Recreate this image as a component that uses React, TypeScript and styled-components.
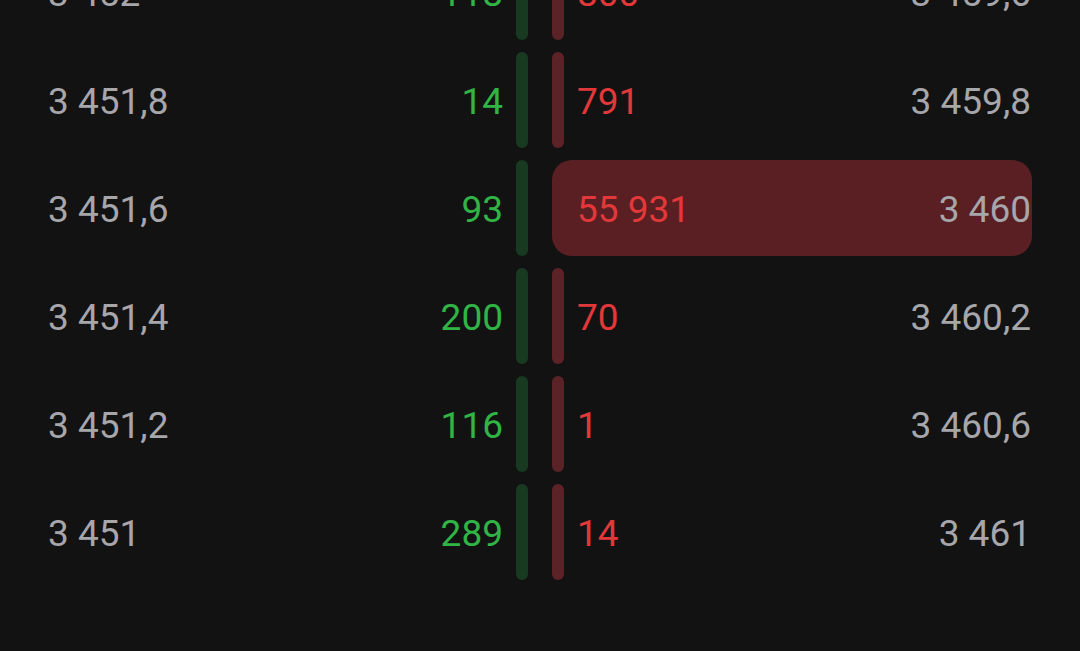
import React from 'react';
import styled, { createGlobalStyle } from 'styled-components';

const GlobalStyle = createGlobalStyle`
html, body {
  margin: 0;
  padding: 0;
  background: #121212;
  overflow: hidden;
}
`;

const COLORS = {
    bg: '#121212',
    price: '#a6a6ab',
    bid: '#31b446',
    ask: '#e2383a',
    bidBar: '#173a20',
    askBar: '#5b2327',
    highlight: '#5a1f22',
};

type Row = {
    bidPrice: string;
    bidQty: string;
    askQty: string;
    askPrice: string;
    highlighted?: boolean;
};

const rows: Row[] = [
    { bidPrice: '3 452', bidQty: '118', askQty: '800', askPrice: '3 459,6' },
    { bidPrice: '3 451,8', bidQty: '14', askQty: '791', askPrice: '3 459,8' },
    {
        bidPrice: '3 451,6',
        bidQty: '93',
        askQty: '55 931',
        askPrice: '3 460',
        highlighted: true,
    },
    { bidPrice: '3 451,4', bidQty: '200', askQty: '70', askPrice: '3 460,2' },
    { bidPrice: '3 451,2', bidQty: '116', askQty: '1', askPrice: '3 460,6' },
    { bidPrice: '3 451', bidQty: '289', askQty: '14', askPrice: '3 461' },
];

const Screen = styled.div`
    width: 1080px;
    height: 651px;
    background: ${COLORS.bg};
    overflow: hidden;
    font-family: Roboto, 'Noto Sans', sans-serif;
    font-size: 37px;
`;

// list is scrolled, so the first row sits partly above the top edge
const Book = styled.div`
    display: flex;
    flex-direction: column;
    gap: 12px;
    margin-top: -56px;
    padding: 0 48px;
`;

const BookRow = styled.div`
    display: flex;
    align-items: stretch;
    height: 96px;
`;

const BidSide = styled.div`
    width: 480px;
    display: flex;
    align-items: center;
`;

const Cell = styled.span`
    padding-top: 3px;
`;

const Price = styled(Cell)`
    color: ${COLORS.price};
`;

const BidQty = styled(Cell)`
    margin-left: auto;
    margin-right: 13px;
    color: ${COLORS.bid};
`;

const Bar = styled.div<{ $color: string }>`
    width: 12px;
    align-self: stretch;
    border-radius: 6px;
    background: ${(p) => p.$color};
    flex-shrink: 0;
`;

const AskSide = styled.div<{ $highlighted?: boolean }>`
    margin-left: 24px;
    flex: 1;
    display: flex;
    align-items: center;
    border-radius: 20px;
    background: ${(p) => (p.$highlighted ? COLORS.highlight : 'transparent')};
`;

const AskQty = styled(Cell)`
    margin-left: 13px;
    color: ${COLORS.ask};
`;

const AskPrice = styled(Price)`
    margin-left: auto;
    margin-right: 1px;
`;

export default function App() {
    return (
        <Screen>
            <GlobalStyle />
            <Book>
                {rows.map((row) => (
                    <BookRow key={row.bidPrice}>
                        <BidSide>
                            <Price>{row.bidPrice}</Price>
                            <BidQty>{row.bidQty}</BidQty>
                            <Bar $color={COLORS.bidBar} />
                        </BidSide>
                        <AskSide $highlighted={row.highlighted}>
                            <Bar
                                $color={
                                    row.highlighted
                                        ? 'transparent'
                                        : COLORS.askBar
                                }
                            />
                            <AskQty>{row.askQty}</AskQty>
                            <AskPrice>{row.askPrice}</AskPrice>
                        </AskSide>
                    </BookRow>
                ))}
            </Book>
        </Screen>
    );
}
